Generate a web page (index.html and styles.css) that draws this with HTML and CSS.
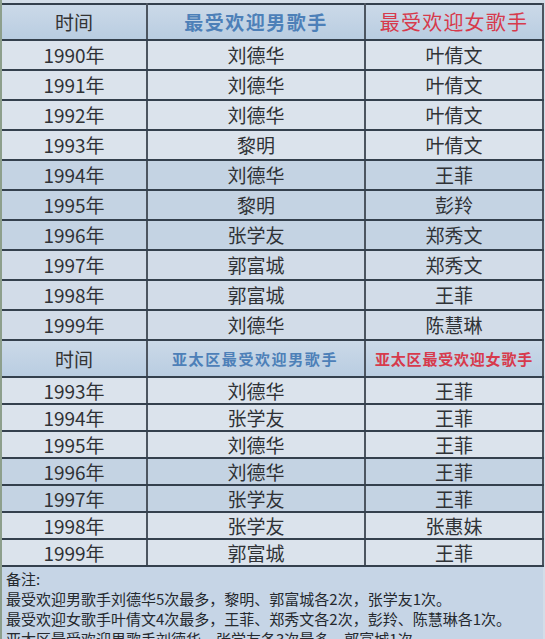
FILE: index.html
```html
<!DOCTYPE html>
<html lang="zh">
<head>
<meta charset="utf-8">
<title>最受欢迎歌手</title>
<link rel="stylesheet" href="styles.css">
</head>
<body>
<div class="sheet">
<table class="grid">
<colgroup><col class="c1"><col class="c2"><col class="c3"></colgroup>
<tr class="head"><td class="time">时间</td><td class="male">最受欢迎男歌手</td><td class="female">最受欢迎女歌手</td></tr>
<tr class="light"><td>1990年</td><td>刘德华</td><td>叶倩文</td></tr>
<tr class="light"><td>1991年</td><td>刘德华</td><td>叶倩文</td></tr>
<tr class="light"><td>1992年</td><td>刘德华</td><td>叶倩文</td></tr>
<tr class="light"><td>1993年</td><td>黎明</td><td>叶倩文</td></tr>
<tr class="dark"><td>1994年</td><td>刘德华</td><td>王菲</td></tr>
<tr class="dark"><td>1995年</td><td>黎明</td><td>彭羚</td></tr>
<tr class="dark"><td>1996年</td><td>张学友</td><td>郑秀文</td></tr>
<tr class="mid"><td>1997年</td><td>郭富城</td><td>郑秀文</td></tr>
<tr class="mid"><td>1998年</td><td>郭富城</td><td>王菲</td></tr>
<tr class="mid"><td>1999年</td><td>刘德华</td><td>陈慧琳</td></tr>
<tr class="head head2"><td class="time">时间</td><td class="male small">亚太区最受欢迎男歌手</td><td class="female small">亚太区最受欢迎女歌手</td></tr>
<tr class="light short"><td>1993年</td><td>刘德华</td><td>王菲</td></tr>
<tr class="light short"><td>1994年</td><td>张学友</td><td>王菲</td></tr>
<tr class="light short"><td>1995年</td><td>刘德华</td><td>王菲</td></tr>
<tr class="dark short"><td>1996年</td><td>刘德华</td><td>王菲</td></tr>
<tr class="dark short"><td>1997年</td><td>张学友</td><td>王菲</td></tr>
<tr class="light short"><td>1998年</td><td>张学友</td><td>张惠妹</td></tr>
<tr class="light short"><td>1999年</td><td>郭富城</td><td>王菲</td></tr>
</table>
<div class="notes">
<p>备注:</p>
<p>最受欢迎男歌手刘德华5次最多，黎明、郭富城各2次，张学友1次。</p>
<p>最受欢迎女歌手叶倩文4次最多，王菲、郑秀文各2次，彭羚、陈慧琳各1次。</p>
<p>亚太区最受欢迎男歌手刘德华、张学友各3次最多，郭富城1次</p>
</div>
</div>
</body>
</html>
```
FILE: styles.css
```css
html, body {
  margin: 0;
  padding: 0;
  background: #d3dde8;
  width: 545px;
  height: 639px;
  overflow: hidden;
}
.sheet {
  padding-top: 3px;
  border-left: 2px solid #8d9f8c;
  width: 541px;
  font-family: "Noto Sans CJK SC", "Noto Sans", sans-serif;
}
.grid {
  border-collapse: collapse;
  width: 541px;
  table-layout: fixed;
}
.c1 { width: 145px; }
.c2 { width: 218px; }
.c3 { width: 178px; }
.grid td {
  border: 2px solid #34404d;
  border-left-color: #4c5560;
  border-right-color: #4c5560;
  text-align: center;
  padding: 0;
  font-size: 19px;
  color: #2f3236;
  line-height: 26px;
  height: 28px;
}
.grid td:first-child { border-left: none; }
.grid tr.short td { height: 25px; line-height: 24px; }
.grid tr.light td { background: #dbe3ec; }
.grid tr.mid td { background: #d2dce8; }
.grid tr.dark td { background: #c4d3e3; }
.grid tr.head td {
  height: 34px;
  background: linear-gradient(#cbd9e8, #b9cde1);
}
.grid tr.head2 td { height: 35px; }
.grid td.time { font-size: 19px; color: #333; }
.grid td.male {
  color: #4d80b8;
  font-weight: bold;
  font-size: 19px;
  letter-spacing: 1.5px;
}
.grid td.female {
  color: #d73a4c;
  font-size: 20px;
  letter-spacing: 1.2px;
}
.grid td.male.small {
  font-size: 15px;
  letter-spacing: 1.6px;
  text-align: left;
  padding-left: 24px;
}
.grid td.female.small {
  font-size: 15px;
  font-weight: bold;
  letter-spacing: 0.8px;
}
.notes {
  background: #c6d5e6;
  padding: 2px 0 0 4px;
  font-size: 15px;
  color: #25292e;
  line-height: 20px;
}
.notes p { margin: 0; white-space: nowrap; }
```
